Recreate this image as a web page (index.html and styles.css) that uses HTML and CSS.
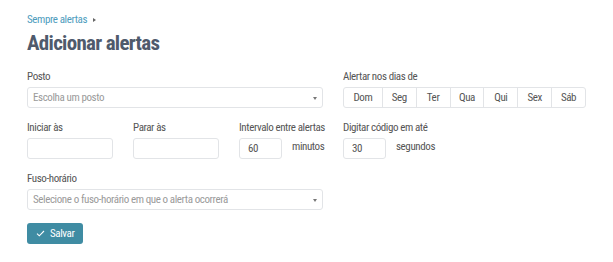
FILE: index.html
```html
<!DOCTYPE html>
<html>
<head>
    <meta charset="UTF-8">
    <title>Adicionar alertas</title>
    <link rel="stylesheet" href="styles.css">
</head>
<body>
    <div class="page">
        <div class="breadcrumb">
            <a href="#">Sempre alertas</a>
            <span class="caret"></span>
        </div>
        <h1>Adicionar alertas</h1>

        <div class="form">
            <div class="col-left">
                <div class="field">
                    <label>Posto</label>
                    <div class="select">
                        <span class="placeholder">Escolha um posto</span>
                        <span class="arrow"></span>
                    </div>
                </div>

                <div class="row">
                    <div class="field time">
                        <label>Iniciar às</label>
                        <input type="text" class="input wide">
                    </div>
                    <div class="field time">
                        <label>Parar às</label>
                        <input type="text" class="input wide">
                    </div>
                    <div class="field">
                        <label>Intervalo entre alertas</label>
                        <div class="inline">
                            <input type="text" class="input short" value="60">
                            <span class="unit">minutos</span>
                        </div>
                    </div>
                </div>

                <div class="field">
                    <label>Fuso-horário</label>
                    <div class="select">
                        <span class="placeholder">Selecione o fuso-horário em que o alerta ocorrerá</span>
                        <span class="arrow"></span>
                    </div>
                </div>

                <button class="save">
                    <svg width="9" height="7" viewBox="0 0 9 7"><path d="M1 3.6 L3.3 5.8 L8 1" fill="none" stroke="white" stroke-width="1.1"/></svg>
                    Salvar
                </button>
            </div>

            <div class="col-right">
                <div class="field">
                    <label>Alertar nos dias de</label>
                    <div class="days">
                        <span class="day">Dom</span>
                        <span class="day">Seg</span>
                        <span class="day">Ter</span>
                        <span class="day">Qua</span>
                        <span class="day">Qui</span>
                        <span class="day">Sex</span>
                        <span class="day">Sáb</span>
                    </div>
                </div>
                <div class="field">
                    <label>Digitar código em até</label>
                    <div class="inline">
                        <input type="text" class="input short" value="30">
                        <span class="unit">segundos</span>
                    </div>
                </div>
            </div>
        </div>
    </div>
</body>
</html>
```

FILE: styles.css
```css
body {
    margin: 0;
    font-family: Roboto, "Liberation Sans", sans-serif;
    font-stretch: condensed;
    font-size: 11px;
    letter-spacing: -0.4px;
    color: #555;
    background: #fff;
}
.page {
    padding: 13px 27px;
}
.breadcrumb {
    display: flex;
    align-items: center;
    gap: 6px;
    line-height: 13px;
}
.breadcrumb a {
    color: #4e9cbd;
    text-decoration: none;
}
.caret {
    width: 0;
    height: 0;
    border-left: 3px solid #666;
    border-top: 2.5px solid transparent;
    border-bottom: 2.5px solid transparent;
}
h1 {
    margin: 5px 0 0 0;
    font-size: 21px;
    line-height: 24px;
    font-weight: 700;
    letter-spacing: -0.7px;
    color: #4f5a6c;
}
.form {
    display: grid;
    grid-template-columns: 296px 243px;
    gap: 20px;
    margin-top: 15px;
}
.field {
    display: flex;
    flex-direction: column;
    margin-bottom: 13px;
}
label {
    display: block;
    line-height: 13px;
    margin-bottom: 4px;
    color: #555;
    white-space: nowrap;
}
.select {
    height: 21px;
    box-sizing: border-box;
    border: 1px solid #e2e4e7;
    border-radius: 3px;
    display: flex;
    align-items: center;
    justify-content: space-between;
    padding: 0 5px 0 5px;
}
.placeholder {
    color: #9a9a9a;
}
.arrow {
    width: 0;
    height: 0;
    border-top: 3px solid #777;
    border-left: 2.5px solid transparent;
    border-right: 2.5px solid transparent;
    margin-top: 1px;
}
.row {
    display: flex;
    gap: 20px;
}
.input {
    height: 21px;
    box-sizing: border-box;
    border: 1px solid #e2e4e7;
    border-radius: 3px;
    padding: 0 8px;
    font-family: inherit;
    font-stretch: condensed;
    font-size: 11px;
    letter-spacing: -0.4px;
    color: #555;
    outline: none;
}
.input.wide {
    width: 86px;
}
.input.short {
    width: 43px;
}
.inline {
    display: flex;
    align-items: flex-start;
    gap: 10px;
}
.unit {
    margin-top: 2px;
}
.days {
    display: flex;
    height: 21px;
    box-sizing: border-box;
    border: 1px solid #e2e4e7;
    border-radius: 3px;
}
.day {
    flex: 1;
    display: flex;
    align-items: center;
    justify-content: center;
    border-left: 1px solid #e2e4e7;
    color: #555;
}
.day:first-child {
    border-left: none;
    flex: 1.15;
}
.save {
    display: flex;
    align-items: center;
    gap: 5px;
    height: 21px;
    padding: 0 9px;
    border: none;
    border-radius: 3px;
    background: #3f8ca3;
    color: white;
    font-family: inherit;
    font-stretch: condensed;
    font-size: 11px;
    letter-spacing: -0.4px;
    cursor: pointer;
}
```
